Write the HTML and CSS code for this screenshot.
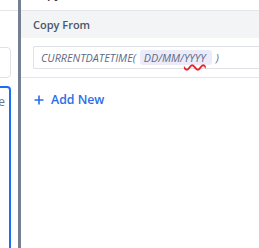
FILE: index.html
```html
<!DOCTYPE html>
<html lang="en">
<head>
    <meta charset="UTF-8">
    <title>Copy From</title>
    <link rel="stylesheet" href="styles.css">
</head>
<body>

<div class="page">
    <div class="left-panel">
        <div class="left-head"></div>
        <div class="left-field"></div>
        <div class="left-card">
            <div class="left-label">Date</div>
            <div class="left-input"></div>
            <div class="left-input"></div>
            <div class="left-input"></div>
        </div>
    </div>

    <div class="drawer">
        <div class="drawer-head">
            <h2 class="drawer-title">Copy Field</h2>
        </div>
        <div class="section-head">Copy From</div>
        <div class="section-body">
            <div class="formula">
                <span>CURRENTDATETIME(</span>
                <span class="chip">DD/MM/<span class="typo">YYYY</span></span>
                <span>)</span>
            </div>
        </div>
        <button class="add-new">
            <svg width="10" height="10" viewBox="0 0 10 10"><path d="M5 0.5V9.5M0.5 5H9.5" stroke="currentColor" stroke-width="1.6"/></svg>
            Add New
        </button>
    </div>
</div>

</body>
</html>
```

FILE: styles.css
```css
body {
    margin: 0;
    font-family: "Open Sans", "Noto Sans", sans-serif;
    background-color: #ffffff;
}
.page {
    display: flex;
    height: 248px;
    overflow: hidden;
}
.left-panel {
    width: 18px;
    flex-shrink: 0;
    overflow: hidden;
}
.left-head {
    height: 10px;
    border-bottom: 1px solid #e4e6ea;
}
.left-field {
    margin: 36px 7px 0 -40px;
    height: 29px;
    border: 1px solid #dfe1e6;
    border-radius: 4px;
}
.left-card {
    margin: 8px 7px 0 -40px;
    height: 200px;
    padding: 6px 10px 0 0;
    border: 2px solid #1a6ff0;
    border-radius: 4px;
}
.left-label {
    font-size: 12px;
    color: #6b7588;
    text-align: right;
    margin-right: -6px;
    line-height: 16px;
}
.left-input {
    height: 21px;
    border: 1px solid #e1e3e8;
    border-radius: 3px;
    margin-top: 34px;
}
.drawer {
    flex: 1;
    border-left: 3px solid #747f93;
    display: flex;
    flex-direction: column;
}
.drawer-head {
    height: 10px;
    overflow: hidden;
    border-bottom: 1px solid #e4e6ea;
}
.drawer-title {
    margin: -15px 0 0 11px;
    font-size: 12px;
    font-weight: 600;
    color: #2d3748;
    line-height: 18px;
}
.section-head {
    height: 27px;
    line-height: 27px;
    padding-left: 12px;
    background-color: #f3f4f6;
    font-size: 11px;
    font-weight: 600;
    color: #4a5568;
}
.section-body {
    padding: 8px 0 8px 12px;
    border-bottom: 1px solid #e4e6ea;
}
.formula {
    height: 21px;
    border: 1px solid #dfe1e6;
    border-right: none;
    border-radius: 2px 0 0 2px;
    padding-left: 7px;
    display: flex;
    align-items: center;
    gap: 4px;
    font-size: 10.8px;
    font-style: italic;
    color: #5d6a86;
    white-space: nowrap;
}
.chip {
    background-color: #ecebfa;
    border-radius: 3px;
    padding: 0 6px 0 4px;
    line-height: 15px;
}
.typo {
    text-decoration: underline wavy #e8262a;
    text-decoration-thickness: 1.6px;
    text-underline-offset: 2px;
}
.add-new {
    align-self: flex-start;
    margin: 13px 0 0 13px;
    padding: 0;
    border: none;
    background: none;
    display: flex;
    align-items: center;
    gap: 7px;
    font-family: inherit;
    font-size: 12.3px;
    font-weight: 600;
    color: #2b6de6;
    cursor: pointer;
}
```
